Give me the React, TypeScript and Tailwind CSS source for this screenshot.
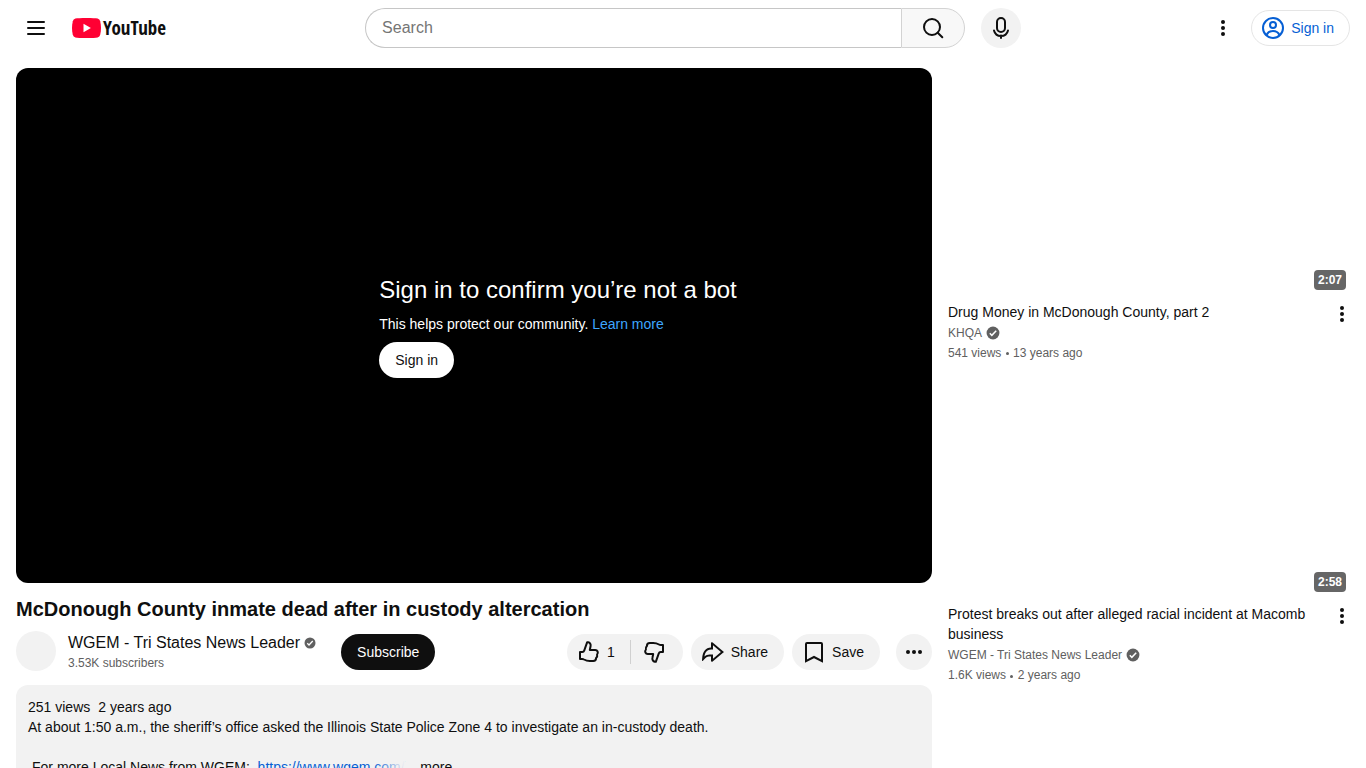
import type { FC, ReactNode } from 'react';

interface Video {
  id: number;
  title: string;
  channel: string;
  views: string;
  age: string;
  duration: string;
}

const videos: Video[] = [
  {
    id: 1,
    title: 'Drug Money in McDonough County, part 2',
    channel: 'KHQA',
    views: '541 views',
    age: '13 years ago',
    duration: '2:07',
  },
  {
    id: 2,
    title: 'Protest breaks out after alleged racial incident at Macomb business',
    channel: 'WGEM - Tri States News Leader',
    views: '1.6K views',
    age: '2 years ago',
    duration: '2:58',
  },
];

const LineIcon: FC<{ children: ReactNode; className?: string }> = ({ children, className = '' }) => (
  <svg
    viewBox="0 0 24 24"
    className={`size-6 shrink-0 ${className}`}
    fill="none"
    stroke="currentColor"
    strokeWidth="2"
    aria-hidden="true"
  >
    {children}
  </svg>
);

const ThumbIcon: FC<{ className?: string }> = ({ className }) => (
  <LineIcon className={className}>
    <path
      d="M3 12h2.3a2 2 0 0 0 1.9-1.3L10.2 2.2l1 .15a3 3 0 0 1 2.4 3.6L12.8 10h5.3a2.6 2.6 0 0 1 2 4.4c.4 1.4 0 2.6-1 3.6 0 1.8-1.2 3-2.9 3h-3.5c-2 0-4-.5-5.7-1.5-.6-.4-1.2-.5-1.9-.5H3z"
      strokeLinejoin="round"
    />
  </LineIcon>
);

const KebabIcon: FC<{ className?: string }> = ({ className = '' }) => (
  <svg viewBox="0 0 24 24" className={`size-6 shrink-0 ${className}`} fill="currentColor" aria-hidden="true">
    <circle cx="12" cy="6" r="2" />
    <circle cx="12" cy="12" r="2" />
    <circle cx="12" cy="18" r="2" />
  </svg>
);

const Verified: FC<{ className: string }> = ({ className }) => (
  <svg viewBox="0 0 24 24" className={`shrink-0 text-[#606060] ${className}`} role="img" aria-label="Verified">
    <circle cx="12" cy="12" r="11" fill="currentColor" />
    <path d="m6.5 12.5 3.5 3.5 7.5-8" fill="none" stroke="#fff" strokeWidth="2.5" />
  </svg>
);

const Header = () => (
  <header className="flex h-14 items-center justify-between px-4">
    <div className="flex w-[167px] shrink-0 items-center gap-4">
      <button type="button" aria-label="Guide" className="flex size-10 items-center justify-center rounded-full">
        <LineIcon>
          <path d="M4 6h16M4 12h16M4 18h16" strokeLinecap="round" />
        </LineIcon>
      </button>
      <a href="#home" aria-label="YouTube Home" className="flex items-center gap-0.5">
        <svg viewBox="0 0 29 20" className="h-5 w-[29px] shrink-0" aria-hidden="true">
          <path
            d="M14.5 0C20 0 24 .2 25.6.6a3.6 3.6 0 0 1 2.6 2.6c.5 2 .8 4.3.8 6.8s-.3 4.8-.8 6.8a3.6 3.6 0 0 1-2.6 2.6c-1.6.4-5.6.6-11.1.6s-9.5-.2-11.1-.6A3.6 3.6 0 0 1 .8 16.8C.3 14.8 0 12.5 0 10s.3-4.8.8-6.8A3.6 3.6 0 0 1 3.4.6C5 .2 9 0 14.5 0z"
            fill="#ff0033"
          />
          <path d="M11.5 5.800v8.400l7.400-4.200z" fill="#fff" />
        </svg>
        <span className="font-['Open_Sans_Condensed','Roboto_Condensed','Liberation_Sans_Narrow','Liberation_Sans',sans-serif] text-[19px] leading-5 font-bold">
          YouTube
        </span>
      </a>
    </div>

    <div className="flex min-w-0 flex-1 items-center justify-center gap-4">
      <form role="search" className="flex h-10 w-full max-w-[600px]">
        <input
          type="text"
          aria-label="Search"
          placeholder="Search"
          className="min-w-0 flex-1 rounded-l-full border border-r-0 border-[#c6c6c6] pl-4 text-base leading-6 placeholder:text-[#757575]"
        />
        <button
          type="button"
          aria-label="Search"
          className="flex w-16 items-center justify-center rounded-r-full border border-[#d3d3d3] bg-[#f8f8f8]"
        >
          <LineIcon>
            <circle cx="11" cy="11" r="8" />
            <path d="m16.7 16.7 4.6 4.6" strokeLinecap="round" />
          </LineIcon>
        </button>
      </form>
      <button
        type="button"
        aria-label="Search with your voice"
        className="flex size-10 shrink-0 items-center justify-center rounded-full bg-[#f2f2f2]"
      >
        <LineIcon>
          <rect x="8" y="2" width="8" height="14" rx="4" />
          <path d="M5 14.5a7.2 7.2 0 0 0 14 0M12 19.5V22" strokeLinecap="round" />
        </LineIcon>
      </button>
    </div>

    <div className="flex shrink-0 items-center gap-2">
      <button type="button" aria-label="Settings" className="flex size-10 items-center justify-center rounded-full">
        <KebabIcon />
      </button>
      <a
        href="#signin"
        className="flex h-9 items-center gap-1.5 rounded-full border border-[#e5e5e5] pr-[15px] pl-[9px] text-sm text-[#065fd4]"
      >
        <LineIcon>
          <circle cx="12" cy="12" r="10" />
          <circle cx="12" cy="9" r="3" />
          <path d="M5.5 19c1.2-2.6 3.6-4 6.5-4s5.3 1.4 6.5 4" />
        </LineIcon>
        Sign in
      </a>
    </div>
  </header>
);

const Player = () => (
  <section className="flex aspect-video items-center justify-center rounded-xl bg-black pl-[168px] text-white">
    <div>
      <h2 className="text-2xl leading-8">Sign in to confirm you’re not a bot</h2>
      <p className="mt-2 text-sm leading-5">
        This helps protect our community.{' '}
        <a href="#learn" className="text-[#3ea6ff]">
          Learn more
        </a>
      </p>
      <button type="button" className="mt-2 h-9 rounded-full bg-white px-4 text-sm text-[#0f0f0f]">
        Sign in
      </button>
    </div>
  </section>
);

const Actions = () => (
  <div className="flex items-center gap-2 text-sm">
    <div className="flex h-9 items-center rounded-full bg-[#f2f2f2]">
      <button type="button" aria-label="Like" className="flex items-center gap-1.5 pr-[15px] pl-2.5">
        <ThumbIcon />1
      </button>
      <span className="h-6 w-px bg-[#d0d0d0]" />
      <button type="button" aria-label="Dislike" className="flex items-center pr-[17px] pl-[11px]">
        <ThumbIcon className="rotate-180" />
      </button>
    </div>
    <button type="button" className="flex h-9 items-center gap-1.5 rounded-full bg-[#f2f2f2] pr-4 pl-2.5">
      <svg viewBox="0 0 24 24" className="size-6" fill="currentColor" aria-hidden="true">
        <path d="M10 3.158V7.51c-5.428.223-8.27 3.75-8.875 11.199-.04.487-.07.975-.09 1.464l-.014.395c-.014.473.578.684.88.32.302-.368.61-.73.925-1.086l.244-.273c1.79-1.967 3-2.677 4.93-2.917a18.011 18.011 0 012-.112v4.346a1 1 0 001.646.763l9.805-8.297 1.55-1.31-1.55-1.31-9.805-8.297A1 1 0 0010 3.158Zm2 6.27v.002-4.116l7.904 6.688L12 18.689v-4.212l-2.023.024c-1.935.022-3.587.17-5.197 1.024a9 9 0 00-1.348.893c.355-1.947.916-3.39 1.63-4.425 1.062-1.541 2.607-2.385 5.02-2.485L12 9.428Z" />
      </svg>
      Share
    </button>
    <button type="button" className="flex h-9 items-center gap-1.5 rounded-full bg-[#f2f2f2] pr-4 pl-2.5">
      <LineIcon>
        <path d="M5 3h14a1 1 0 0 1 1 1v17.2l-8-4.2-8 4.2V4a1 1 0 0 1 1-1z" />
      </LineIcon>
      Save
    </button>
    <button
      type="button"
      aria-label="More actions"
      className="ml-2 flex size-9 items-center justify-center rounded-full bg-[#f2f2f2]"
    >
      <KebabIcon className="rotate-90" />
    </button>
  </div>
);

const VideoCard: FC<{ video: Video }> = ({ video }) => (
  <li>
    <a href="#watch" aria-label={video.title} className="flex aspect-video items-end justify-end p-1">
      <span className="rounded bg-[#666666] px-1 text-xs leading-5 font-bold text-white">{video.duration}</span>
    </a>
    <div className="mt-2 flex items-start justify-between gap-2">
      <div>
        <h3 className="text-sm leading-5">{video.title}</h3>
        <div className="mt-px text-xs leading-5 text-[#606060]">
          <p className="flex items-center gap-1">
            {video.channel} <Verified className="size-3.5" />
          </p>
          <p>
            {video.views} <span className="mx-px inline-block size-[3px] rounded-full bg-[#606060] align-middle" /> {video.age}
          </p>
        </div>
      </div>
      <button type="button" aria-label="More" className="flex h-6 w-4 shrink-0 items-center justify-center">
        <KebabIcon />
      </button>
    </div>
  </li>
);

const App: FC = () => {
  return (
    <div className="h-screen overflow-hidden bg-white font-['Liberation_Sans',Arial,sans-serif] text-[#0f0f0f]">
      <Header />

      <div className="flex gap-4 px-4 pt-3">
        <main className="min-w-0 flex-1">
          <Player />
          <h1 className="mt-3 text-xl leading-7 font-bold">McDonough County inmate dead after in custody altercation</h1>

          <div className="mt-2 flex items-center justify-between">
            <div className="flex h-[42px] items-center">
              <div className="mr-3 size-10 self-start rounded-full bg-[#f2f2f2]" />
              <div className="mr-[25px]">
                <p className="flex items-center gap-1 text-base leading-[22px]">
                  WGEM - Tri States News Leader <Verified className="size-3" />
                </p>
                <p className="text-xs leading-[18px] text-[#606060]">3.53K subscribers</p>
              </div>
              <button type="button" className="h-9 rounded-full bg-[#0f0f0f] px-4 text-sm text-white">
                Subscribe
              </button>
            </div>
            <Actions />
          </div>

          <div className="mt-3 rounded-xl bg-[#f2f2f2] p-3 text-sm leading-5">
            <p className="flex gap-2">
              <span>251 views</span>
              <span>2 years ago</span>
            </p>
            <p>At about 1:50 a.m., the sheriff’s office asked the Illinois State Police Zone 4 to investigate an in-custody death.</p>
            <div className="mt-5 flex gap-1">
              <p className="relative pl-1 whitespace-pre">
                {'For more Local News from WGEM:  '}
                <a href="#wgem" className="text-[#065fd4]">
                  https://www.wgem.com/
                </a>
                <span className="absolute inset-y-0 right-0 w-8 bg-linear-to-r from-transparent to-[#f2f2f2]" />
              </p>
              <button type="button">...more</button>
            </div>
          </div>
        </main>

        <aside className="w-[402px] shrink-0">
          <ul className="space-y-[7px]">
            {videos.map(video => (
              <VideoCard key={video.id} video={video} />
            ))}
          </ul>
        </aside>
      </div>
    </div>
  );
};

export default App;
